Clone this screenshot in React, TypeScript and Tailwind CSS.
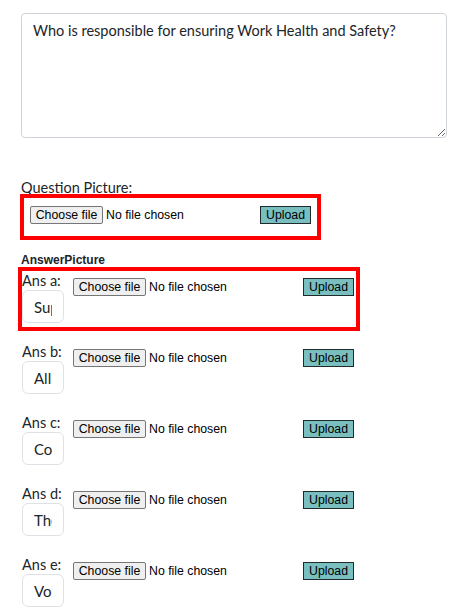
import React from "react";

function FileChooser() {
  return (
    <div className="flex w-[230px] items-center font-['Liberation_Sans',Arial,sans-serif] text-[12.3px] leading-[16px] text-black">
      <span className="flex h-[18px] w-[73px] items-center justify-center rounded-[2px] border border-[#767676] bg-[#efefef]">
        Choose file
      </span>
      <span className="ml-[3px] whitespace-nowrap">No file chosen</span>
    </div>
  );
}

function Upload() {
  return (
    <button
      type="button"
      className="flex h-[18px] w-[51px] items-center justify-center border border-[#1f2a2a] bg-[#7abfbf] font-['Liberation_Sans',Arial,sans-serif] text-[12.3px] leading-[16px] text-black"
    >
      Upload
    </button>
  );
}

function AnsRow({
  letter,
  value,
  boxed,
}: {
  letter: string;
  value: string;
  boxed?: boolean;
}) {
  return (
    <div
      className={
        boxed
          ? "ml-[1px] flex h-[56px] w-[334px] outline-4 outline-[#ff0000]"
          : "ml-[1px] flex h-[56px] w-[334px]"
      }
    >
      <div className="flex w-[42px] flex-col">
        <div className="h-[19px] whitespace-nowrap text-[14.5px] leading-[19px] text-[#212529]">
          Ans {letter}:
        </div>
        <input
          readOnly
          defaultValue={value}
          className="h-[33px] w-[42px] rounded-[6px] border border-[#dee2e6] bg-white px-[11px] font-['Lato',sans-serif] text-[15px] text-[#212529] outline-none"
        />
      </div>
      <div className="ml-[9px] mt-[7px] flex items-start">
        <FileChooser />
        <Upload />
      </div>
    </div>
  );
}

export default function App() {
  const answers = [
    { l: "a", v: "Supervisors", boxed: true },
    { l: "b", v: "All workers" },
    { l: "c", v: "Company directors" },
    { l: "d", v: "The employer" },
    { l: "e", v: "Volunteers" },
  ];
  return (
    <div className="min-h-[613px] w-[463px] bg-white pl-[21px] pt-[13px] font-['Lato',sans-serif] text-[#212529]">
      <textarea
        readOnly
        defaultValue="Who is responsible for ensuring Work Health and Safety?"
        className="block h-[125px] w-[426px] rounded-[4px] border border-[#ced4da] px-[11px] pt-[5px] font-['Lato',sans-serif] text-[14.5px] leading-[24px] text-[#212529] outline-none"
      />
      <div className="mt-[40px] h-[19px] text-[14.5px] leading-[19px] text-[#212529]">
        Question Picture:
      </div>
      <div className="ml-[3px] mt-[1px] flex w-[293px] items-start pb-[12px] pl-[6px] pt-[8px] outline-4 outline-[#ff0000]">
        <FileChooser />
        <Upload />
      </div>
      <div className="mt-[17px] h-[14px] font-['Liberation_Sans',Arial,sans-serif] text-[12px] font-bold leading-[14px] text-[#212529]">
        AnswerPicture
      </div>
      <div className="mt-[4px] flex flex-col gap-[15px]">
        {answers.map((a) => (
          <AnsRow key={a.l} letter={a.l} value={a.v} boxed={a.boxed} />
        ))}
      </div>
    </div>
  );
}
